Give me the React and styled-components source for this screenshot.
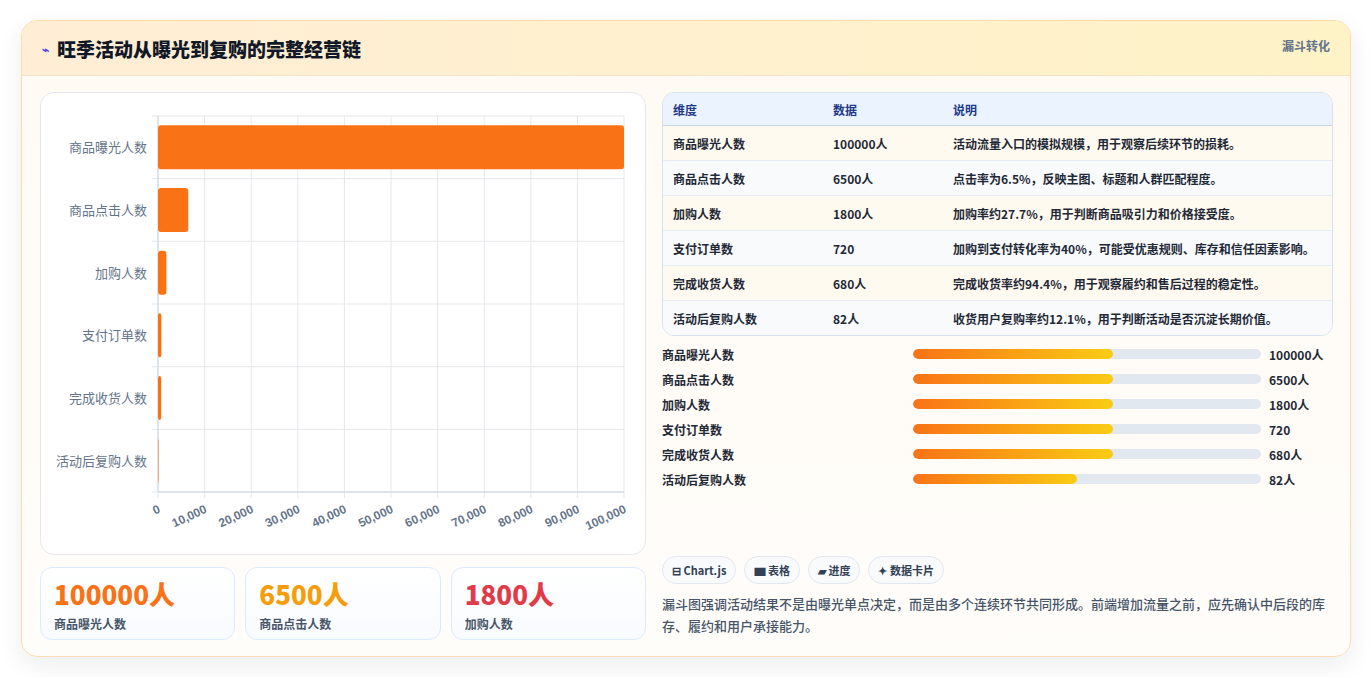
import React from 'react';
import styled, { createGlobalStyle } from 'styled-components';

const GlobalStyle = createGlobalStyle`
  body {
    margin: 0;
    background: #ffffff;
    font-family: "Noto Sans CJK SC", "Noto Sans", sans-serif;
  }
`;

const funnel = [
  { name: '商品曝光人数', value: 100000, unit: '人', desc: '活动流量入口的模拟规模，用于观察后续环节的损耗。', fill: 200 },
  { name: '商品点击人数', value: 6500, unit: '人', desc: '点击率为6.5%，反映主图、标题和人群匹配程度。', fill: 200 },
  { name: '加购人数', value: 1800, unit: '人', desc: '加购率约27.7%，用于判断商品吸引力和价格接受度。', fill: 200 },
  { name: '支付订单数', value: 720, unit: '', desc: '加购到支付转化率为40%，可能受优惠规则、库存和信任因素影响。', fill: 200 },
  { name: '完成收货人数', value: 680, unit: '人', desc: '完成收货率约94.4%，用于观察履约和售后过程的稳定性。', fill: 200 },
  { name: '活动后复购人数', value: 82, unit: '人', desc: '收货用户复购率约12.1%，用于判断活动是否沉淀长期价值。', fill: 164 },
];

const Page = styled.div`
  padding: 20px 21px;
`;

const Card = styled.div`
  border: 1px solid #fcdcae;
  border-radius: 16px;
  background: linear-gradient(180deg, #fffaf3, #fffdfa);
  box-shadow: 0 8px 24px rgba(15, 23, 42, 0.08);
  overflow: hidden;
  height: 637px;
  box-sizing: border-box;
`;

const Header = styled.div`
  height: 54px;
  display: flex;
  align-items: center;
  justify-content: space-between;
  padding: 0 20px;
  background: linear-gradient(90deg, #ffedd5, #fef3c7);
  border-bottom: 1px solid #f3e3c8;
`;

const Title = styled.h2`
  margin: 0;
  font-size: 19px;
  font-weight: 800;
  color: #111827;
  display: flex;
  align-items: center;
  gap: 8px;
`;

const Tag = styled.span`
  font-size: 12px;
  font-weight: 700;
  color: #64748b;
  align-self: flex-start;
  margin-top: 16px;
`;

const Body = styled.div`
  display: grid;
  grid-template-columns: 606px 671px;
  gap: 16px;
  padding: 16px 18px 0 18px;
`;

const Col = styled.div`
  display: flex;
  flex-direction: column;
`;

const ChartBox = styled.div`
  height: 461px;
  background: #fff;
  border: 1px solid #e2e8f0;
  border-radius: 14px;
`;

const Stats = styled.div`
  display: grid;
  grid-template-columns: repeat(3, 1fr);
  gap: 10px;
  margin-top: 12px;
`;

const Stat = styled.div`
  height: 73px;
  box-sizing: border-box;
  border: 1px solid #dbeafe;
  border-radius: 12px;
  background: linear-gradient(180deg, #ffffff, #f8fbff);
  padding: 9px 13px;
`;

const StatNum = styled.div`
  font-size: 26px;
  font-weight: 800;
  line-height: 34px;
  color: ${p => p.color};
  margin-bottom: 4px;
`;

const StatLabel = styled.div`
  font-size: 12px;
  font-weight: 600;
  color: #475569;
`;

const Table = styled.table`
  width: 100%;
  border-collapse: separate;
  border-spacing: 0;
  border: 1px solid #d6e2f0;
  border-radius: 12px;
  overflow: hidden;
  font-size: 12px;
  color: #1f2937;
  font-weight: 600;
`;

const Th = styled.th`
  text-align: left;
  background: #eaf3fe;
  color: #1e3a8a;
  height: 32px;
  padding: 0 10px;
  border-bottom: 1px solid #c7d7ea;
  font-weight: 700;
  width: ${p => p.w || 'auto'};
`;

const Td = styled.td`
  height: 34px;
  padding: 0 10px;
  background: ${p => (p.alt ? '#f8fafc' : '#fffaf0')};
  border-top: ${p => (p.first ? 'none' : '1px solid #e5ecf4')};
`;

const Bars = styled.div`
  display: flex;
  flex-direction: column;
  gap: 7px;
  margin-top: 9px;
`;

const BarRow = styled.div`
  display: grid;
  grid-template-columns: 243px 348px auto;
  align-items: center;
  gap: 0 8px;
  height: 18px;
  font-size: 12px;
  font-weight: 700;
  color: #1f2937;
`;

const Track = styled.div`
  height: 10px;
  border-radius: 5px;
  background: #e2e8f0;
  overflow: hidden;
`;

const Fill = styled.div`
  height: 100%;
  border-radius: 5px;
  background: linear-gradient(90deg, #f97316, #facc15);
`;

const Chips = styled.div`
  display: flex;
  gap: 8px;
  margin-top: 68px;
`;

const Chip = styled.span`
  height: 28px;
  box-sizing: border-box;
  padding: 0 9px;
  display: inline-flex;
  align-items: center;
  gap: 4px;
  border: 1px solid #e2e8f0;
  border-radius: 14px;
  background: #f8fafc;
  font-size: 11px;
  font-weight: 700;
  color: #334155;
`;

const Note = styled.p`
  margin: 9px 0 0;
  font-size: 13px;
  line-height: 22px;
  color: #475569;
  font-weight: 500;
`;

const Chart = () => {
  const x0 = 117, x1 = 583, y0 = 23, y1 = 399;
  const rowH = (y1 - y0) / 6;
  const sx = v => x0 + (v / 100000) * (x1 - x0);
  const ticks = Array.from({ length: 11 }, (_, i) => i * 10000);
  return (
    <svg width="606" height="461" viewBox="0 0 606 461">
      {ticks.map(t => (
        <line key={t} x1={sx(t)} x2={sx(t)} y1={y0} y2={y1 + 6} stroke="#e5e7eb" />
      ))}
      {Array.from({ length: 7 }, (_, i) => (
        <line key={i} x1={x0 - 6} x2={x1} y1={y0 + i * rowH} y2={y0 + i * rowH} stroke="#e5e7eb" />
      ))}
      <line x1={x0} x2={x0} y1={y0} y2={y1} stroke="#cbd5e1" />
      <line x1={x0} x2={x1} y1={y1} y2={y1} stroke="#cbd5e1" />
      {funnel.map((d, i) => {
        const cy = y0 + rowH * i + rowH / 2;
        return (
          <g key={d.name}>
            <rect x={x0} y={cy - 22} width={Math.max(sx(d.value) - x0, 0.5)} height={44} rx={3} fill="#f97316" />
            <text x={x0 - 11} y={cy + 5} textAnchor="end" fontSize="13" fill="#64748b"
              fontFamily='"Noto Sans CJK SC", sans-serif'>{d.name}</text>
          </g>
        );
      })}
      {ticks.map(t => (
        <text key={t} transform={`translate(${sx(t) + 3} ${y1 + 20}) rotate(-25)`} textAnchor="end"
          fontSize="12" fontWeight="700" fill="#64748b" fontFamily='"Liberation Sans", sans-serif'>
          {t.toLocaleString('en-US')}
        </text>
      ))}
    </svg>
  );
};

export default function App() {
  return (
    <Page>
      <GlobalStyle />
      <Card>
        <Header>
          <Title><span style={{ fontSize: 12, color: '#4f46e5' }}>⌁</span>旺季活动从曝光到复购的完整经营链</Title>
          <Tag>漏斗转化</Tag>
        </Header>
        <Body>
          <Col>
            <ChartBox><Chart /></ChartBox>
            <Stats>
              <Stat><StatNum color="#f97316">100000人</StatNum><StatLabel>商品曝光人数</StatLabel></Stat>
              <Stat><StatNum color="#f59e0b">6500人</StatNum><StatLabel>商品点击人数</StatLabel></Stat>
              <Stat><StatNum color="#e23b47">1800人</StatNum><StatLabel>加购人数</StatLabel></Stat>
            </Stats>
          </Col>
          <Col>
            <Table>
              <thead>
                <tr><Th w="140px">维度</Th><Th w="100px">数据</Th><Th>说明</Th></tr>
              </thead>
              <tbody>
                {funnel.map((d, i) => (
                  <tr key={d.name}>
                    <Td alt={i % 2 === 1} first={i === 0}>{d.name}</Td>
                    <Td alt={i % 2 === 1} first={i === 0}>{d.value}{d.unit}</Td>
                    <Td alt={i % 2 === 1} first={i === 0}>{d.desc}</Td>
                  </tr>
                ))}
              </tbody>
            </Table>
            <Bars>
              {funnel.map(d => (
                <BarRow key={d.name}>
                  <span>{d.name}</span>
                  <Track><Fill style={{ width: d.fill }} /></Track>
                  <span>{d.value}{d.unit}</span>
                </BarRow>
              ))}
            </Bars>
            <Chips>
              <Chip>⊟ Chart.js</Chip>
              <Chip>▆ 表格</Chip>
              <Chip>▰ 进度</Chip>
              <Chip>✦ 数据卡片</Chip>
            </Chips>
            <Note>漏斗图强调活动结果不是由曝光单点决定，而是由多个连续环节共同形成。前端增加流量之前，应先确认中后段的库存、履约和用户承接能力。</Note>
          </Col>
        </Body>
      </Card>
    </Page>
  );
}
